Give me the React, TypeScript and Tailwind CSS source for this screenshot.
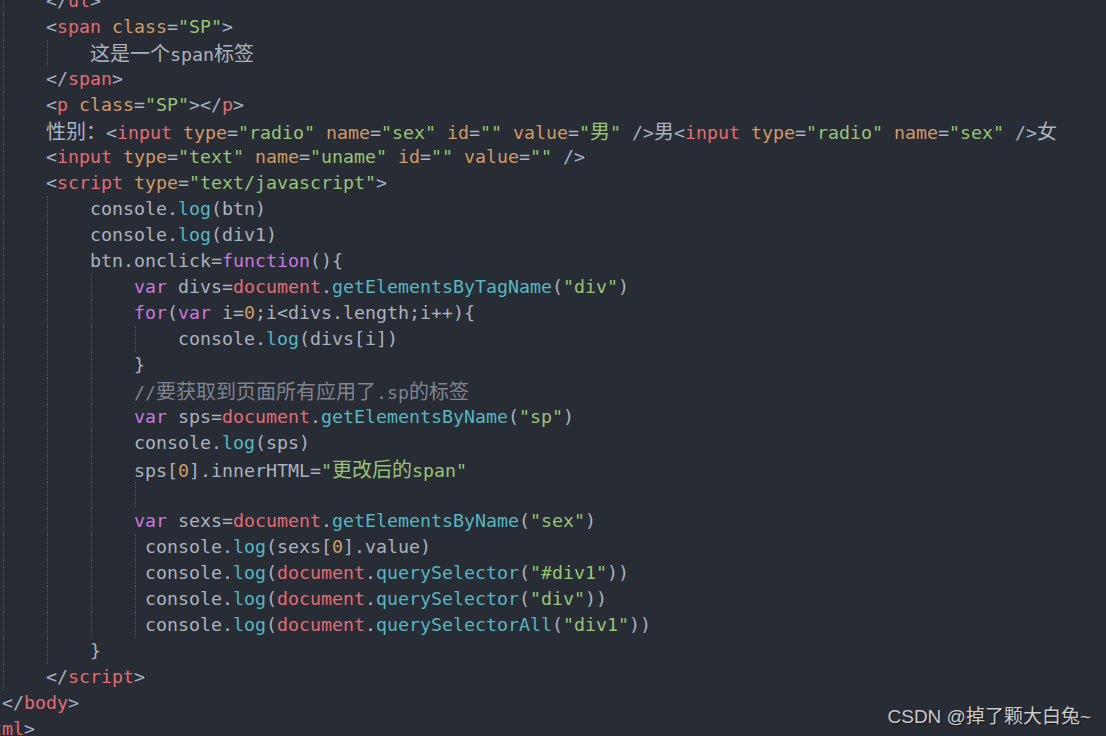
const C = {
  t: "text-[#e06c75]",
  a: "text-[#d19a66]",
  s: "text-[#98c379]",
  b: "text-[#a3b1c2]",
  k: "text-[#c678dd]",
  f: "text-[#56b6c2]",
  n: "text-[#d19a66]",
  c: "text-[#7f848e]",
  x: "text-[#abb2bf]",
};

type Tok = [keyof typeof C, string];
type Line = { d: number; extra?: boolean; toks: Tok[] };

const tag = (name: string): Tok[] => [["b", "<"], ["t", name]];
const attr = (name: string, val: string): Tok[] => [
  ["x", " "],
  ["a", name],
  ["x", "="],
  ["s", val],
];
const log = (inner: Tok[]): Tok[] => [["x", "console."], ["f", "log"], ["x", "("], ...inner, ["x", ")"]];
const query = (fn: string, arg: string): Tok[] =>
  log([["t", "document"], ["x", "."], ["f", fn], ["x", "("], ["s", arg], ["x", ")"]]);

const lines: Line[] = [
  { d: 2, toks: [["b", "</"], ["t", "ul"], ["b", ">"]] },
  { d: 2, toks: [...tag("span"), ...attr("class", '"SP"'), ["b", ">"]] },
  { d: 3, toks: [["x", "这是一个span标签"]] },
  { d: 2, toks: [["b", "</"], ["t", "span"], ["b", ">"]] },
  { d: 2, toks: [...tag("p"), ...attr("class", '"SP"'), ["b", "></"], ["t", "p"], ["b", ">"]] },
  {
    d: 2,
    toks: [
      ["x", "性别："],
      ...tag("input"),
      ...attr("type", '"radio"'),
      ...attr("name", '"sex"'),
      ...attr("id", '""'),
      ...attr("value", '"男"'),
      ["x", " "],
      ["b", "/>"],
      ["x", "男"],
      ...tag("input"),
      ...attr("type", '"radio"'),
      ...attr("name", '"sex"'),
      ["x", " "],
      ["b", "/>"],
      ["x", "女"],
    ],
  },
  {
    d: 2,
    toks: [
      ...tag("input"),
      ...attr("type", '"text"'),
      ...attr("name", '"uname"'),
      ...attr("id", '""'),
      ...attr("value", '""'),
      ["x", " "],
      ["b", "/>"],
    ],
  },
  { d: 2, toks: [...tag("script"), ...attr("type", '"text/javascript"'), ["b", ">"]] },
  { d: 3, toks: log([["x", "btn"]]) },
  { d: 3, toks: log([["x", "div1"]]) },
  { d: 3, toks: [["x", "btn.onclick="], ["k", "function"], ["x", "(){"]] },
  {
    d: 4,
    toks: [["k", "var"], ["x", " divs="], ["t", "document"], ["x", "."], ["f", "getElementsByTagName"], ["x", "("], ["s", '"div"'], ["x", ")"]],
  },
  { d: 4, toks: [["k", "for"], ["x", "("], ["k", "var"], ["x", " i="], ["n", "0"], ["x", ";i<divs.length;i++){"]] },
  { d: 5, toks: log([["x", "divs[i]"]]) },
  { d: 4, toks: [["x", "}"]] },
  { d: 4, toks: [["c", "//要获取到页面所有应用了.sp的标签"]] },
  {
    d: 4,
    toks: [["k", "var"], ["x", " sps="], ["t", "document"], ["x", "."], ["f", "getElementsByName"], ["x", "("], ["s", '"sp"'], ["x", ")"]],
  },
  { d: 4, toks: log([["x", "sps"]]) },
  { d: 4, toks: [["x", "sps["], ["n", "0"], ["x", "].innerHTML="], ["s", '"更改后的span"']] },
  { d: 5, toks: [] },
  {
    d: 4,
    toks: [["k", "var"], ["x", " sexs="], ["t", "document"], ["x", "."], ["f", "getElementsByName"], ["x", "("], ["s", '"sex"'], ["x", ")"]],
  },
  { d: 4, extra: true, toks: log([["x", "sexs["], ["n", "0"], ["x", "].value"]]) },
  { d: 4, extra: true, toks: query("querySelector", '"#div1"') },
  { d: 4, extra: true, toks: query("querySelector", '"div"') },
  { d: 4, extra: true, toks: query("querySelectorAll", '"div1"') },
  { d: 3, toks: [["x", "}"]] },
  { d: 2, toks: [["b", "</"], ["t", "script"], ["b", ">"]] },
  { d: 1, toks: [["b", "</"], ["t", "body"], ["b", ">"]] },
  { d: 0, toks: [["b", "</"], ["t", "html"], ["b", ">"]] },
];

// CJK glyphs are drawn wider than the mono cell, like the editor's fallback font
function Text({ text }: { text: string }) {
  const parts = text.split(/([\u3000-\u9fff\uff00-\uffef]+)/);
  return (
    <>
      {parts.map((p, i) =>
        /[\u3000-\u9fff\uff00-\uffef]/.test(p) ? (
          <span key={i} className="font-['Noto_Sans_CJK_SC',sans-serif] text-[20px]">
            {p}
          </span>
        ) : (
          p
        )
      )}
    </>
  );
}

function Guide({ w }: { w: string }) {
  return (
    <span className={`inline-block h-[26px] align-top ${w}`}>
      <span className="ml-[1px] block h-full border-l border-dotted border-[#4b5262]" />
    </span>
  );
}

function CodeLine({ line }: { line: Line }) {
  return (
    <div className="h-[26px] whitespace-pre leading-[26px]">
      {Array.from({ length: line.d }).map((_, i) => (
        <Guide key={i} w="w-[44px]" />
      ))}
      {line.extra && <Guide w="w-[11px]" />}
      {line.toks.map(([k, v], i) => (
        <span key={i} className={C[k]}>
          <Text text={v} />
        </span>
      ))}
    </div>
  );
}

export default function App() {
  return (
    <div className="relative h-[736px] w-[1106px] overflow-hidden bg-[#282c34]">
      <div className="-ml-[42px] -mt-[12px] font-['DejaVu_Sans_Mono','Noto_Sans_CJK_SC',monospace] text-[18.27px] text-[#abb2bf]">
        {lines.map((l, i) => (
          <CodeLine key={i} line={l} />
        ))}
      </div>

      {/* watermark */}
      <div className="absolute bottom-[5px] right-[15px] font-['Liberation_Sans','Noto_Sans_CJK_SC',sans-serif] text-[19px] text-[#c9cacc] [text-shadow:1px_1px_1px_rgba(0,0,0,0.5)]">
        CSDN @掉了颗大白兔~
      </div>
    </div>
  );
}
